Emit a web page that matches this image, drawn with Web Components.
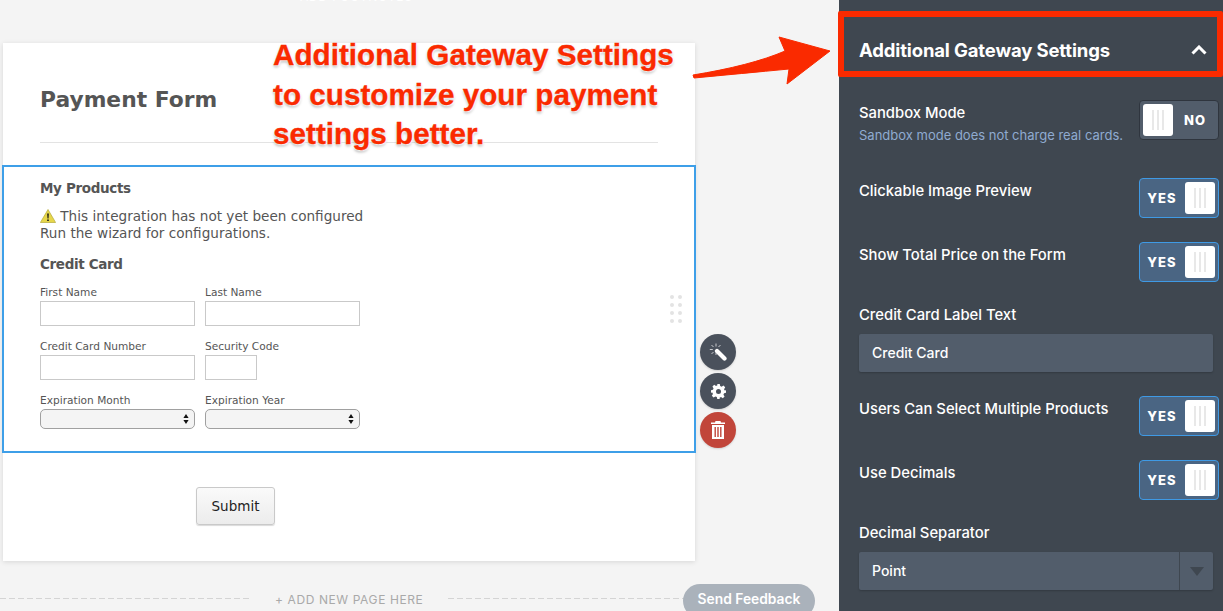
<!DOCTYPE html>
<html><head><meta charset="utf-8"><style>
html,body{margin:0;padding:0;height:611px;overflow:hidden;background:#f4f4f4}
</style></head><body>
<builder-app></builder-app>
<script>
function def(name,css,html){customElements.define(name,class extends HTMLElement{constructor(){super();this.attachShadow({mode:'open'}).innerHTML=`<style>${css}</style>`+(typeof html==='function'?html(this):html)}})}

def('toggle-switch',`:host{display:block;width:80px;height:40px;box-sizing:border-box;border-radius:4px;border:1px solid #2f353e;background:#525d6b;color:#fff;font:800 13px/1 Inter,sans-serif;letter-spacing:1px}
:host([on]){background:#4a6583;border-color:#3f9ae5}
.w{display:flex;align-items:center;justify-content:space-between;height:100%;padding:3px;box-sizing:border-box}
.k{width:30px;height:32px;background:#fff;border-radius:3px;display:flex;gap:3px;justify-content:center;align-items:center;flex:none}
.k u{display:block;width:2.300px;height:20px;background:#e8e8e8}
b{flex:1;text-align:center;font-weight:800;padding-top:1px}
.y{padding-right:4px}.n{padding-left:2px}`,
(h)=>h.hasAttribute('on')?`<div class="w"><b class="y">YES</b><div class="k"><u></u><u></u><u></u></div></div>`:`<div class="w"><div class="k"><u></u><u></u><u></u></div><b class="n">NO</b></div>`);

def('setting-row',`:host{display:flex;justify-content:space-between;align-items:flex-start;padding:0 4px 0 20px;color:#fff;font:500 14.800px/20px Inter,sans-serif}
.l{padding-top:3px}.s{font-size:13px;font-weight:400;color:#8fabd0;line-height:16px;margin-top:4px}`,
`<div class="l"><slot></slot><div class="s"><slot name="sub"></slot></div></div><slot name="ctl"></slot>`);

def('side-panel',`:host{display:block;width:384px;flex:none;height:611px;background:#3f4750;box-sizing:border-box;padding-top:16px;overflow:hidden;font:500 14.800px/20px Inter,sans-serif;color:#fff}
.hd{height:59px;display:flex;align-items:center;justify-content:space-between;padding:8px 16px 0 20px;font-size:18.500px;font-weight:700;letter-spacing:-.14px;box-sizing:border-box}
.hd svg{display:block}
.rows{padding-top:25px}
.lab{padding:0 0 0 20px;margin-bottom:9px;height:20px}
.inp,.sel{margin:0 10px 0 20px;height:38px;background:#525d6b;border-radius:2px;display:flex;align-items:center;padding-left:13px;font-size:14px;box-shadow:0 1px 2px rgba(0,0,0,.2)}
.sel span{flex:1}.sel em{width:33px;height:38px;border-left:1px solid #3f4750;display:flex;align-items:center;justify-content:center}`,
`<div class="hd"><span>Additional Gateway Settings</span><svg width="16" height="10" viewBox="0 0 16 10"><path d="M1.500 8.500 8 2l6.500 6.500" fill="none" stroke="#fff" stroke-width="3"/></svg></div>
<div class="rows">
<setting-row style="margin-bottom:39px;height:39px">Sandbox Mode<span slot="sub">Sandbox mode does not charge real cards.</span><toggle-switch slot="ctl"></toggle-switch></setting-row>
<setting-row style="margin-bottom:24px">Clickable Image Preview<toggle-switch slot="ctl" on></toggle-switch></setting-row>
<setting-row style="margin-bottom:23px">Show Total Price on the Form<toggle-switch slot="ctl" on></toggle-switch></setting-row>
<div class="lab">Credit Card Label Text</div>
<div class="inp">Credit Card</div>
<div style="height:24px"></div>
<setting-row style="margin-bottom:24px">Users Can Select Multiple Products<toggle-switch slot="ctl" on></toggle-switch></setting-row>
<setting-row style="margin-bottom:23px">Use Decimals<toggle-switch slot="ctl" on></toggle-switch></setting-row>
<div class="lab">Decimal Separator</div>
<div class="sel"><span>Point</span><em><svg width="14" height="9" viewBox="0 0 14 9"><path d="M0 0h14L7 9z" fill="#3f4750"/></svg></em></div>
</div>`);

def('form-field',`:host{display:block;font:10.600px/14px "DejaVu Sans",sans-serif;color:#555}
.l{height:14px;margin-bottom:2px;white-space:nowrap}
.i{box-sizing:border-box;height:25px;border:1px solid #c9c9c9;background:#fff;width:100%}
:host([short]) .i{width:52px}
.s{box-sizing:border-box;height:20px;border:1px solid #a0a0a0;border-radius:5px;background:#f4f4f4;margin-top:1px;display:flex;align-items:center;justify-content:flex-end;padding-right:5px}`,
(h)=>`<div class="l"><slot></slot></div>`+(h.hasAttribute('select')?`<div class="s"><svg width="6" height="12" viewBox="0 0 6 12"><path d="M3 1l2.600 4H.4zM3 11 .4 7h5.200z" fill="#111"/></svg></div>`:`<div class="i"></div>`));

def('form-card',`:host{display:block;position:absolute;left:3px;top:43px;width:692px;height:518px;background:#fff;box-shadow:0 1px 5px rgba(0,0,0,.12);font-family:"DejaVu Sans",sans-serif;color:#555}
.head{height:100px;margin:0 37px;box-sizing:border-box;border-bottom:1px solid #e3e3e3;padding-top:41px;font:bold 21.800px/32px "DejaVu Sans",sans-serif;color:#555}
.sel{position:relative;margin:22px -1px 0;height:288px;box-sizing:border-box;border:2px solid #3e9fe8;padding:11px 36px 0}
h3{margin:0;font:bold 13.500px/20px "DejaVu Sans",sans-serif;letter-spacing:-.35px;color:#555}
.msg{font:13.600px/17px "DejaVu Sans",sans-serif;margin-top:10px;height:34px;color:#555}
.msg svg{vertical-align:-2px}
.cc{margin-top:12px;margin-bottom:11px}
.g{display:grid;grid-template-columns:155px 155px;column-gap:10px;row-gap:13px;width:320px}
.dots{position:absolute;right:12px;top:128px;display:grid;grid-template-columns:4px 4px;gap:4px}
.dots u{display:block;width:4px;height:4px;border-radius:50%;background:#e3e3e3}
.sub{display:flex;padding:34px 0 0 193px}
.btn{box-sizing:border-box;width:79px;height:38px;border:1px solid #c9c9c9;border-radius:3px;background:linear-gradient(#fafafa,#ececec);box-shadow:0 1px 1px rgba(0,0,0,.15);font:13.500px/36px "DejaVu Sans",sans-serif;color:#222;text-align:center}
.tools{position:absolute;left:697px;top:291px;display:flex;flex-direction:column;gap:3px}
.t{width:36px;height:36px;border-radius:50%;background:#4a515c;display:flex;align-items:center;justify-content:center;box-shadow:0 1px 2px rgba(0,0,0,.15)}
.t.r{background:#c1453a}`,
`<div class="head">Payment Form</div>
<div class="sel">
<h3>My Products</h3>
<div class="msg"><svg width="16" height="14" viewBox="0 0 16 14"><path d="M8 .5 15.600 13.500H.4z" fill="#e6d64a" stroke="#b5a93a" stroke-width=".7"/><path d="M7.200 4.500h1.600l-.3 5h-1zM7.200 10.500h1.600V12H7.200z" fill="#111"/></svg> This integration has not yet been configured<br>Run the wizard for configurations.</div>
<h3 class="cc">Credit Card</h3>
<div class="g">
<form-field>First Name</form-field><form-field>Last Name</form-field>
<form-field>Credit Card Number</form-field><form-field short>Security Code</form-field>
<form-field select>Expiration Month</form-field><form-field select>Expiration Year</form-field>
</div>
<div class="dots"><u></u><u></u><u></u><u></u><u></u><u></u><u></u><u></u></div>
</div>
<div class="sub"><div class="btn">Submit</div></div>
<div class="tools">
<div class="t"><svg width="18" height="18" viewBox="0 0 18 18"><path d="M8 8l7.500 7.500" stroke="#fff" stroke-width="4.200" stroke-linecap="round" fill="none"/><path d="M7 .5v3M7 9.500v2.500M.8 6.500h3M2.500 2 4.500 4M2.500 11 4.500 9M11.500 2 9.500 4" stroke="#fff" stroke-width=".7" fill="none"/></svg></div>
<div class="t"><svg width="15" height="15" viewBox="0 0 24 24"><path fill="#fff" fill-rule="evenodd" d="M10 0h4l.7 3.300 2.300 1 2.900-1.800 2.800 2.800-1.800 2.900 1 2.300L24 10v4l-3.100.7-1 2.300 1.800 2.900-2.800 2.800-2.900-1.800-2.300 1L14 24h-4l-.7-3.100-2.300-1-2.900 1.800-2.800-2.800 1.800-2.900-1-2.300L0 14v-4l3.100-.7 1-2.300-1.800-2.900 2.800-2.800 2.900 1.800 2.300-1zM12 8a4 4 0 1 0 0 8 4 4 0 0 0 0-8z"/></svg></div>
<div class="t r"><svg width="14" height="18" viewBox="0 0 14 18"><path fill="#fff" fill-rule="evenodd" d="M4.500 0h5l.5 1.500h4V3H0V1.500h4zM1 4h12v14H1zM3.500 6v10h1.400V6zM6.300 6v10h1.400V6zM9.100 6v10h1.400V6z"/></svg></div>
</div>`);

def('page-divider',`:host{display:flex;position:absolute;left:0;top:592px;width:839px;height:16px;align-items:center;font:12px/16px Inter,sans-serif;color:#a9a9a9}
.d{height:1px;margin-top:-4px;background:repeating-linear-gradient(90deg,#d4d4d4 0 6px,transparent 6px 9px)}
.txt{margin:0 25px 0 26px;letter-spacing:.6px;white-space:nowrap}
.fb{position:absolute;left:683px;top:-8px;width:132px;height:34px;border-radius:17px;background:#aab2bb;color:#fff;font:600 13.800px/31px Inter,sans-serif;text-align:center}`,
`<div class="d" style="width:249px"></div><div class="txt">+ ADD NEW PAGE HERE</div><div class="d" style="width:236px"></div><div class="fb">Send Feedback</div>`);

def('callout-note',`:host{display:block;position:absolute;left:273px;top:35px;width:430px;font:bold 29.700px/39.500px "Liberation Sans",sans-serif;color:#fa2a00;-webkit-text-stroke:.3px #fa2a00;text-shadow:0 0 2px #fff,1px 1px 2px #fff,0 2px 3px rgba(0,0,0,.35);white-space:nowrap}`,
`Additional Gateway Settings<br>to customize your payment<br>settings better.`);

def('builder-app',`:host{display:flex;position:relative;width:1223px;height:611px;overflow:hidden;background:#f4f4f4}
.main{width:839px;flex:none;position:relative}
.top{position:absolute;left:300px;top:-10px;font:12px/14px Inter,sans-serif;color:#fff;letter-spacing:.8px}
.box{position:absolute;left:838px;top:11px;width:385px;height:66px;box-sizing:border-box;border:6px solid #fa2a00;border-radius:2px}
.arrow{position:absolute;left:690px;top:34px}`,
`<div class="main"><div class="top">ADD FOOTNOTES</div><form-card></form-card><page-divider></page-divider></div>
<side-panel></side-panel>
<div class="box"></div>
<svg class="arrow" width="150" height="56" viewBox="0 0 150 56"><path d="M3 41C40 35 72 27 95 17L89 3 140 17 97 50 99 35C68 38 35 41 4 44z" fill="#fa2a00" stroke="#fa2a00" stroke-linejoin="round"/></svg>
<callout-note></callout-note>`);
</script>
</body></html>
